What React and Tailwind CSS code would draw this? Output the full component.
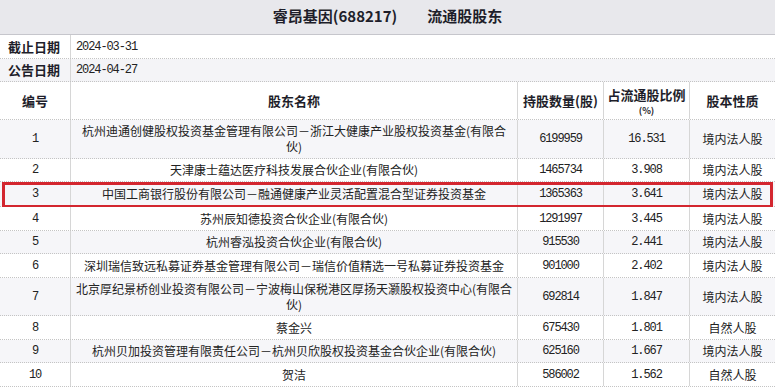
import React from "react";

const rows = [
  { n: "1", name: ["杭州迪通创健股权投资基金管理有限公司－浙江大健康产业股权投资基金(有限合", "伙)"], qty: "6199959", pct: "16.531", type: "境内法人股", h: "h-[39px]" },
  { n: "2", name: ["天津康士蕴达医疗科技发展合伙企业(有限合伙)"], qty: "1465734", pct: "3.908", type: "境内法人股", h: "h-[23px]" },
  { n: "3", name: ["中国工商银行股份有限公司－融通健康产业灵活配置混合型证券投资基金"], qty: "1365363", pct: "3.641", type: "境内法人股", h: "h-[25px]", mark: true },
  { n: "4", name: ["苏州辰知德投资合伙企业(有限合伙)"], qty: "1291997", pct: "3.445", type: "境内法人股", h: "h-[24px]" },
  { n: "5", name: ["杭州睿泓投资合伙企业(有限合伙)"], qty: "915530", pct: "2.441", type: "境内法人股", h: "h-[23px]" },
  { n: "6", name: ["深圳瑞信致远私募证券基金管理有限公司－瑞信价值精选一号私募证券投资基金"], qty: "901000", pct: "2.402", type: "境内法人股", h: "h-[24px]" },
  { n: "7", name: ["北京厚纪景桥创业投资有限公司－宁波梅山保税港区厚扬天灏股权投资中心(有限合", "伙)"], qty: "692814", pct: "1.847", type: "境内法人股", h: "h-[38px]" },
  { n: "8", name: ["蔡金兴"], qty: "675430", pct: "1.801", type: "自然人股", h: "h-[24px]" },
  { n: "9", name: ["杭州贝加投资管理有限责任公司－杭州贝欣股权投资基金合伙企业(有限合伙)"], qty: "625160", pct: "1.667", type: "境内法人股", h: "h-[23px]" },
  { n: "10", name: ["贺洁"], qty: "586002", pct: "1.562", type: "自然人股", h: "h-[24px]" },
];

const cjk = "font-['Noto_Sans_CJK_SC',sans-serif]";
const mono = "font-['Liberation_Mono',monospace] text-[12px] tracking-[-1.1px]";
const grid = "grid grid-cols-[71px_447px_86px_86px_85px]";
const cell = "flex items-center justify-center border-r border-solid border-[#d6d6d6]";

export default function App() {
  return (
    <div className={`w-[775px] h-[390px] bg-white text-[#222] overflow-hidden ${cjk}`}>
      {/* Title */}
      <div className="h-[35px] bg-[#e8e8ec] border-b border-[#c6c6cc] flex items-center justify-center gap-[30px] text-[15px] font-bold text-[#1e1e2a] pb-[1px]">
        <span>睿昂基因(688217)</span>
        <span>流通股股东</span>
      </div>

      {/* Dates */}
      <div className="h-[24px] flex border-b border-dotted border-[#c4c4c4]">
        <div className="w-[71px] border-r border-solid border-[#d6d6d6] flex items-center pl-[8px] text-[13px] font-bold text-[#1e1e2a]">截止日期</div>
        <div className={`flex items-center pl-[5px] ${mono}`}>2024-03-31</div>
      </div>
      <div className="h-[23px] flex border-b border-dotted border-[#c4c4c4] bg-[#f4f4f7]">
        <div className="w-[71px] border-r border-solid border-[#d6d6d6] flex items-center pl-[8px] text-[13px] font-bold text-[#1e1e2a]">公告日期</div>
        <div className={`flex items-center pl-[5px] ${mono}`}>2024-04-27</div>
      </div>

      {/* Header */}
      <div className={`${grid} h-[38px] border-b border-dotted border-[#c4c4c4] text-[13px] font-bold text-[#1e1e2a]`}>
        <div className={cell}>编号</div>
        <div className={cell}>股东名称</div>
        <div className={cell}>持股数量(股)</div>
        <div className={`${cell} flex-col`}>
          <span className="block leading-[19px]">占流通股比例</span>
          <span className="block text-[9px] leading-[13px]">(%)</span>
        </div>
        <div className="flex items-center justify-center">股本性质</div>
      </div>

      {/* Body */}
      {rows.map((r, i) => (
        <div
          key={r.n}
          className={`${grid} ${r.h} relative border-b border-dotted border-[#c4c4c4] text-[12px] ${i % 2 === 0 ? "bg-[#f6f6f9]" : "bg-white"}`}
        >
          <div className={`${cell} ${mono}`}>{r.n}</div>
          <div className={`${cell} flex-col px-[4px] text-center leading-[16px] whitespace-nowrap`}>
            {r.name.map((line) => (
              <span key={line} className="block">{line}</span>
            ))}
          </div>
          <div className={`${cell} ${mono}`}>{r.qty}</div>
          <div className={`${cell} ${mono}`}>{r.pct}</div>
          <div className="flex items-center justify-center">{r.type}</div>
          {r.mark && (
            <div className="absolute left-[2px] right-[2px] top-0 -bottom-[2px] border-[3px] border-solid border-[#d3262f] pointer-events-none" />
          )}
        </div>
      ))}
    </div>
  );
}
